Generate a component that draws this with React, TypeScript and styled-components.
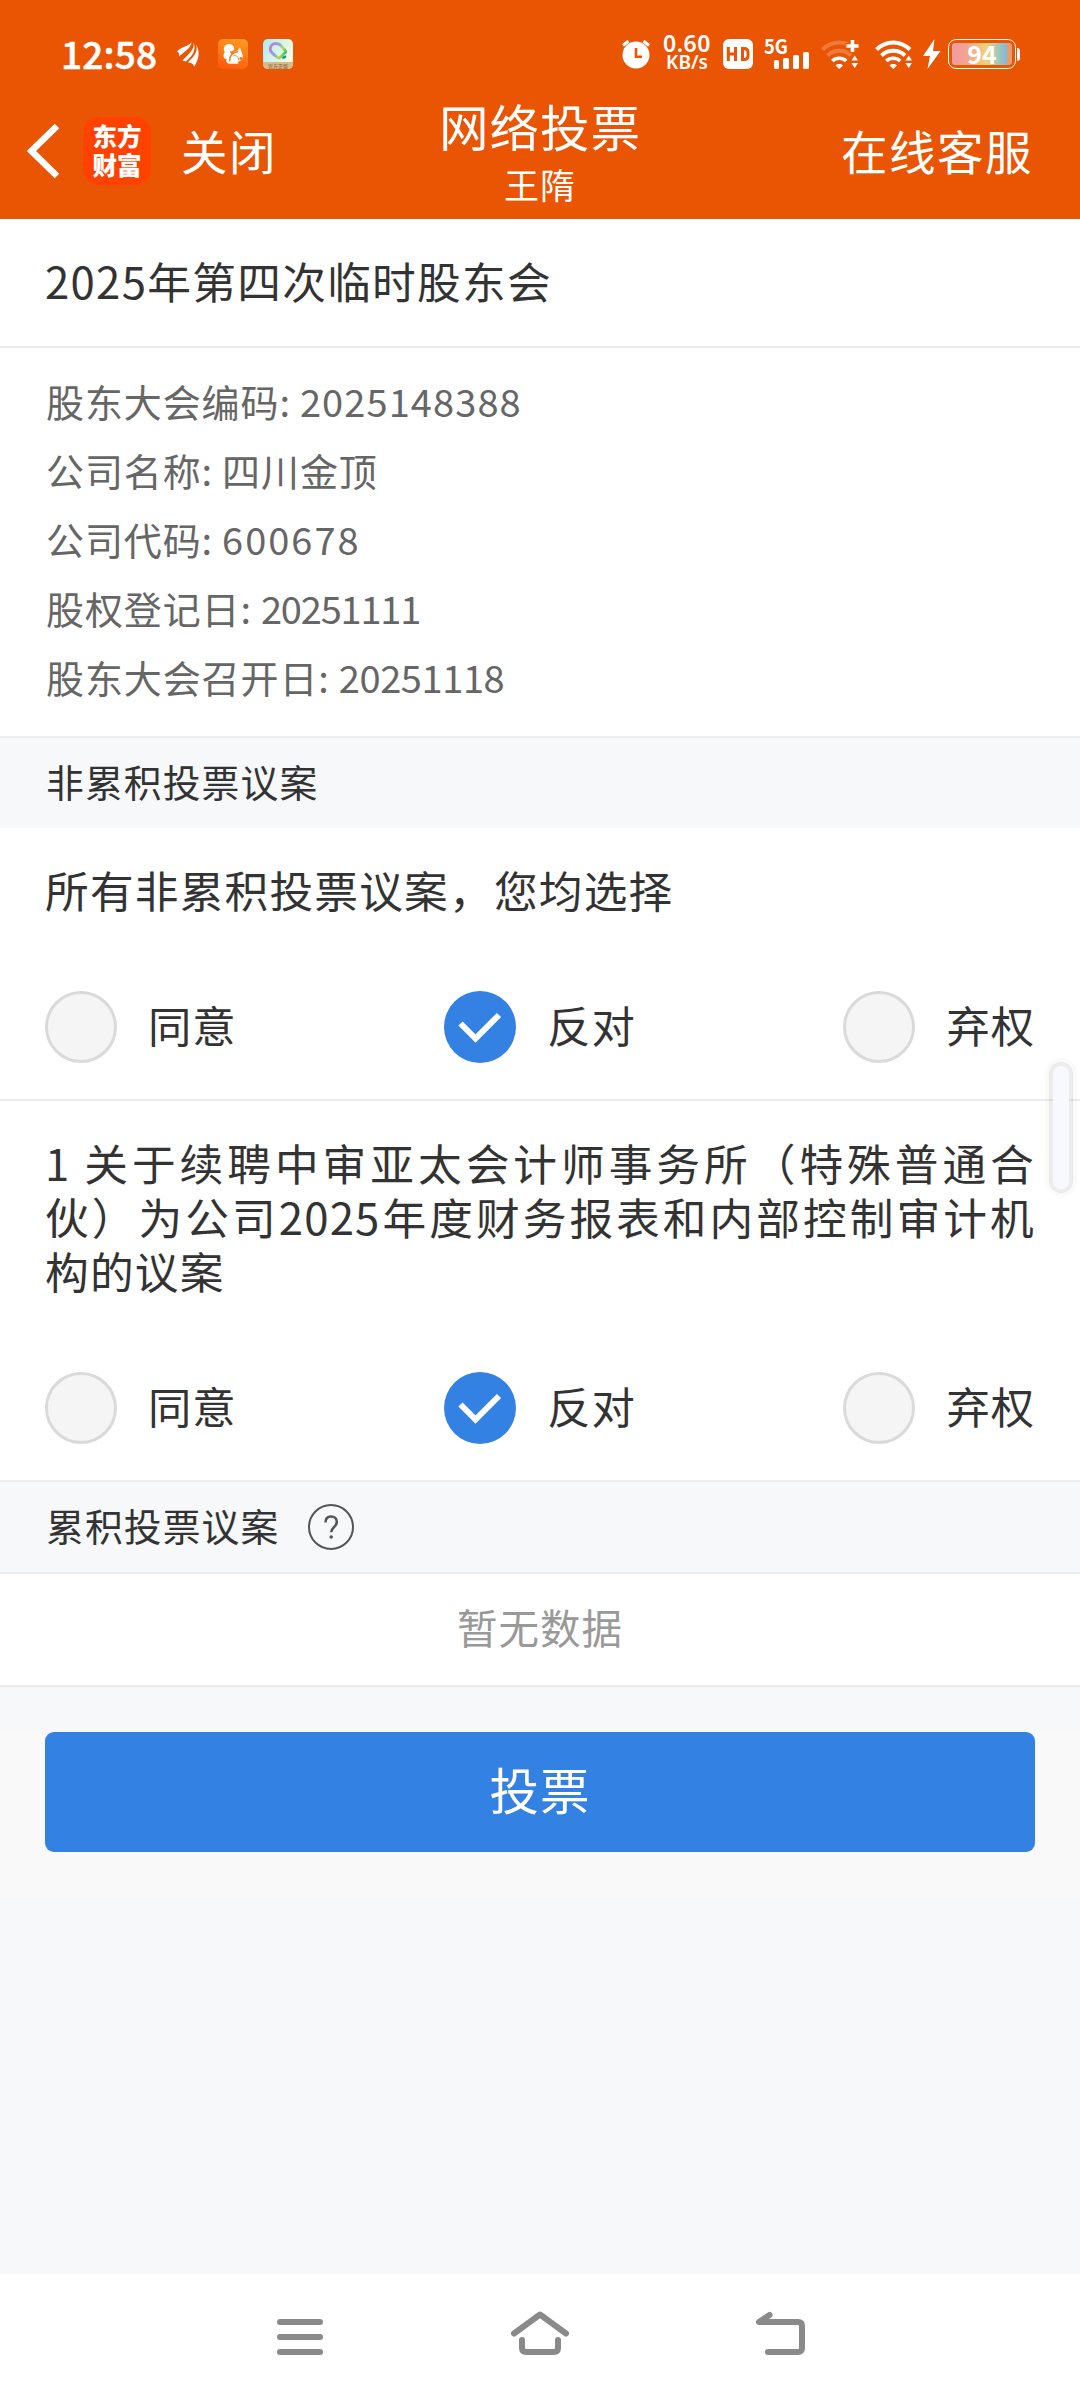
import React, { useState } from "react";
import styled, { createGlobalStyle } from "styled-components";

const Global = createGlobalStyle`
  * { box-sizing: border-box; }
  body { margin: 0; background: #f7f8fa; }
  button { font: inherit; border: 0; padding: 0; background: none; color: inherit; cursor: pointer; }
`;

const Page = styled.div`
  position: relative;
  width: 1080px;
  height: 2400px;
  display: flex;
  flex-direction: column;
  overflow: hidden;
  background: #f7f8fa;
  color: #333;
  font-family: "Noto Sans CJK SC", "Noto Sans", sans-serif;
`;

const Header = styled.header`
  height: 219px;
  background: #ea5504;
  color: #fff;
  flex: none;
`;

const StatusBar = styled.div`
  height: 96px;
  padding: 12px 60px 0 61px;
  display: flex;
  align-items: center;
`;
const Clock = styled.div`
  width: 116px;
  padding-bottom: 3px;
  font-size: 37px;
  line-height: 40px;
  font-weight: 500;
  letter-spacing: 0.2px;
  -webkit-text-stroke: 0.5px #fff;
`;
const StatusIcon = styled.svg<{ $gap?: number }>`
  display: block;
  flex: none;
  overflow: visible;
  margin-left: ${(p) => p.$gap ?? 0}px;
`;
const StatusRight = styled.div`
  margin-left: auto;
  display: flex;
  align-items: center;
`;
const Speed = styled.div`
  width: 52px;
  margin-left: 9px;
  padding-bottom: 3px;
  text-align: center;
  font-family: "Noto Sans", sans-serif;
  font-weight: 600;
  font-size: 23px;
  line-height: 19px;
  letter-spacing: 0.6px;
`;
const SpeedUnit = styled.div`
  font-size: 19px;
  line-height: 19px;
  letter-spacing: 0;
`;
const Battery = styled.div`
  margin-left: 7px;
  width: 68px;
  height: 30px;
  padding: 3px;
  border: 1.5px solid #fff;
  border-radius: 8px;
  display: flex;
`;
const BatteryFill = styled.div`
  width: 100%;
  border-radius: 3px;
  background: linear-gradient(90deg, #f29aa0 0%, #f0a690 25%, #efd27c 58%, #a9c9b4 75%, #7fbbe0 91%, #eb9a70 92%);
  font-size: 25px;
  font-weight: 700;
  line-height: 21px;
  text-align: center;
`;
const BatteryTip = styled.div`
  width: 3px;
  height: 13px;
  margin-left: 1px;
  background: #fff;
  border-radius: 0 3px 3px 0;
`;

const NavBar = styled.div`
  height: 123px;
  display: grid;
  grid-template-columns: 1fr auto 1fr;
  align-items: start;
`;
const NavLeft = styled.div`
  display: flex;
  align-items: center;
  padding: 21px 0 0 27px;
`;
const AppLogo = styled.div`
  width: 68px;
  height: 68px;
  margin-left: 23px;
  border-radius: 15px;
  background: #ff4200;
  display: flex;
  flex-direction: column;
  align-items: center;
  justify-content: center;
  padding-bottom: 3px;
  font-size: 24.5px;
  line-height: 29px;
  font-weight: 900;
`;
const NavLink = styled.button<{ $left?: number }>`
  margin-left: ${(p) => p.$left ?? 0}px;
  padding-bottom: 2px;
  font-size: 46.5px;
  line-height: 58px;
  letter-spacing: 1.5px;
`;
const NavTitle = styled.div`
  margin-top: -3px;
  text-align: center;
  font-size: 49.5px;
  line-height: 66px;
  letter-spacing: 1px;
`;
const NavSub = styled.div`
  font-size: 35px;
  line-height: 50px;
`;
const NavRight = styled.div`
  display: flex;
  justify-content: flex-end;
  padding: 25px 47px 0 0;
`;

const Title = styled.h1`
  margin: 0;
  flex: none;
  height: 129px;
  padding: 29px 45px 0;
  background: #fff;
  border-bottom: 2px solid #ececee;
  font-size: 43.7px;
  letter-spacing: 1.3px;
  line-height: 64px;
  font-weight: 400;
`;
const Info = styled.section`
  flex: none;
  height: 388px;
  padding: 18px 46px 0;
  background: #fff;
  color: #666;
  font-size: 38px;
  letter-spacing: 0.9px;
  line-height: 69px;
`;
const InfoRow = styled.div`
  display: flex;
  gap: 9px;
`;
const InfoValue = styled.span<{ $spacing?: number }>`
  letter-spacing: ${(p) => p.$spacing ?? 0.9}px;
`;

const SectionBar = styled.div<{ $line?: boolean }>`
  flex: none;
  height: ${(p) => (p.$line ? 94 : 92)}px;
  padding: 0 45px;
  display: flex;
  align-items: center;
  gap: 29px;
  background: #f7f8fa;
  border-top: 2px solid #ecedef;
  border-bottom: ${(p) => (p.$line ? "2px solid #ecedef" : "0")};
`;
const SectionName = styled.span`
  padding: 0 0 5px 1px;
  font-size: 37.8px;
  letter-spacing: 1.1px;
  line-height: 54px;
`;
const Proposal = styled.section<{ $height: number; $line?: boolean }>`
  flex: none;
  height: ${(p) => p.$height}px;
  padding: 34px 45px 36px;
  display: flex;
  flex-direction: column;
  justify-content: space-between;
  background: #fff;
  border-bottom: ${(p) => (p.$line ? "2px solid #ececee" : "0")};
`;
const ProposalText = styled.p`
  margin: 0;
  font-size: 43.7px;
  letter-spacing: 1.2px;
  line-height: 54px;
  text-align: justify;
`;
const Options = styled.div`
  display: flex;
  justify-content: space-between;
`;
const Option = styled.button`
  display: flex;
  align-items: center;
  gap: 31px;
`;
const OptionLabel = styled.span`
  padding-bottom: 5px;
  font-size: 43.3px;
  letter-spacing: 1px;
  line-height: 67px;
`;
const Radio = styled.span<{ $on: boolean }>`
  width: 72px;
  height: 72px;
  border-radius: 50%;
  display: flex;
  align-items: center;
  justify-content: center;
  background: ${(p) => (p.$on ? "#3381e3" : "#f5f5f5")};
  border: ${(p) => (p.$on ? "0" : "3px solid #dadada")};
`;
const Help = styled.span`
  width: 46px;
  height: 46px;
  border: 2.5px solid #555;
  border-radius: 50%;
  display: flex;
  align-items: center;
  justify-content: center;
`;
const Empty = styled.div`
  flex: none;
  height: 113px;
  background: #fff;
  border-bottom: 2px solid #ececee;
  color: #999;
  font-size: 40.5px;
  letter-spacing: 1px;
  line-height: 106px;
  text-align: center;
`;
const SubmitArea = styled.div`
  flex: none;
  height: 166px;
  margin-top: 45px;
  padding: 0 45px;
  background: #f9f9f9;
`;
const Submit = styled.button`
  display: block;
  width: 100%;
  height: 120px;
  padding-bottom: 7px;
  border-radius: 9px;
  background: #3381e3;
  color: #fff;
  font-size: 49.5px;
  letter-spacing: 1px;
  line-height: 113px;
`;
const SystemNav = styled.nav`
  flex: none;
  height: 126px;
  margin-top: auto;
  padding: 0 180px 45px;
  display: grid;
  grid-template-columns: repeat(3, 1fr);
  align-items: end;
  justify-items: center;
  background: #fff;

  svg { display: block; }
`;
const EdgeHandle = styled.div`
  position: absolute;
  right: 7px;
  top: 1062px;
  width: 24px;
  height: 131px;
  border: 4px solid rgba(0, 0, 0, 0.07);
  border-radius: 12px;
  background: #f8f9fe;
  background-clip: padding-box;
  box-shadow: 0 0 1px 4px rgba(0, 0, 0, 0.02);
`;

const CHOICES = ["同意", "反对", "弃权"];

function Vote() {
  const [value, setValue] = useState("反对");
  return (
    <Options>
      {CHOICES.map((c) => (
        <Option key={c} onClick={() => setValue(c)}>
          <Radio $on={c === value}>
            {c === value && (
              <svg width="72" height="72" viewBox="0 0 72 72" fill="none" stroke="#fff" strokeWidth="6">
                <path d="M16.5 32.5 31.5 47.5 55 24" />
              </svg>
            )}
          </Radio>
          <OptionLabel>{c}</OptionLabel>
        </Option>
      ))}
    </Options>
  );
}

function Wifi({ weak }: { weak?: boolean }) {
  return (
    <StatusIcon $gap={weak ? 12 : 16} width="38" height="30" viewBox="0 0 38 30" fill="none" stroke="#fff" strokeWidth="4">
      <g opacity={weak ? 0.22 : 1}>
        <path d="M1.5 10.5C11 1 25.5 1 35 10.5" />
        <path d="M6.500 16.500c6.500-6.300 17-6.300 23.500 0" />
      </g>
      <path d="M11.300 22c3.900-3.700 10-3.700 13.900 0" strokeWidth="3.600" />
      <path d="m14.500 26.500c2.200-1.900 5.300-1.900 7.500 0L18.300 30Z" fill="#fff" stroke="none" />
      <path d="m33.700 16.500 3.300 5h-6.600zM33.700 29l3.300-5h-6.600z" fill="#fff" stroke="#ea5504" strokeWidth="1" paintOrder="stroke" />
      {weak && (
        <g>
          <path d="M31.500 0v14M24.500 7h14" stroke="#ea5504" strokeWidth="6" />
          <path d="M31.500 1v12M25.500 7h12" strokeWidth="3.600" />
        </g>
      )}
    </StatusIcon>
  );
}

const INFO: { label: string; value: string; spacing?: number }[] = [
  { label: "股东大会编码:", value: "2025148388", spacing: 1.1 },
  { label: "公司名称:", value: "四川金顶" },
  { label: "公司代码:", value: "600678", spacing: 2 },
  { label: "股权登记日:", value: "20251111", spacing: -1.2 },
  { label: "股东大会召开日:", value: "20251118", spacing: -0.4 },
];

export default function App() {
  return (
    <Page>
      <Global />
      <Header>
        <StatusBar>
          <Clock>12:58</Clock>
          <StatusIcon width="22" height="25" viewBox="0 0 22 25" fill="#fff">
            <path d="M0 9.500C5 4 10 5 14.500.5 13.500 6 8.500 9 2 14.500 2.500 12 2 10.500 0 9.500Z" />
            <path d="M16.300 0C18.500 6.500 12 12 5.500 18.500l3.300 1C15 14.500 20 8 16.300 0Z" />
            <path d="M19.300 2.500c4 8 2.500 14.500-2 22-1-2.500-3-4-6.500-4.300C17 15 21 10 19.300 2.500Z" />
          </StatusIcon>
          <StatusIcon $gap={19} width="30" height="30" viewBox="0 0 30 30">
            <defs>
              <linearGradient id="squirrelBg" x1="0.700" y1="0" x2="0.400" y2="1">
                <stop offset="0" stopColor="#ff9a20" />
                <stop offset="1" stopColor="#ff5a0c" />
              </linearGradient>
            </defs>
            <rect width="30" height="30" rx="5" fill="url(#squirrelBg)" />
            <path d="M10.500 5C6.500 5.500 4.500 9.500 6.800 13.300 4.500 15.500 5 19.500 8.500 20.300c-.8 2.700.5 4.200 3 4.500H20c.8-.7.300-1.700-.8-2 3-.3 5.600-2.300 5.700-5.300 0-1.700-.9-2.500-1.200-4L22 8.500l-2.600 3.300c-2.200 0-4 1.300-5.200 3.400-1.500-.5-2.300-1.700-2-3.200 2 .6 3.800-.2 4-2C16.500 7 14 5 10.500 5Z" fill="#fff" />
            <path d="M11.800 22.500c-.8-5 2.500-9.500 8.500-9.800" fill="none" stroke="#ff7a16" strokeWidth="1.400" />
            <path d="M15.500 16.800c3-.8 5.300 1.300 5 4.500" fill="none" stroke="#ff7a16" strokeWidth="1" />
            <circle cx="22.800" cy="19.500" r="1.400" fill="#ff6a10" />
          </StatusIcon>
          <StatusIcon $gap={15} width="30" height="30" viewBox="0 0 30 30">
            <defs>
              <linearGradient id="badgeBg" x1="0" x2="1" y2="0.600">
                <stop offset="0" stopColor="#aeeaf4" />
                <stop offset="1" stopColor="#fbfbe0" />
              </linearGradient>
              <linearGradient id="badgeLine" x1="0" x2="1" y1="0.300" y2="0.700">
                <stop offset="0" stopColor="#c87bd0" />
                <stop offset="0.400" stopColor="#80a8e8" />
                <stop offset="0.700" stopColor="#c3dd3c" />
                <stop offset="1" stopColor="#2fb68a" />
              </linearGradient>
              <clipPath id="badgeClip">
                <rect width="30" height="30" rx="5" />
              </clipPath>
            </defs>
            <g clipPath="url(#badgeClip)">
              <rect width="30" height="30" fill="url(#badgeBg)" />
              <path d="M7.500 11.500C6.500 7.500 9 4.500 12.500 4.500c2.500 0 4 .2 5.500 2.200l4.300 5c.8 1.300.2 2-1 2.600L17 18.300c-1.200.9-2 .7-3-.3C11 15.700 8.300 14 7.500 11.500Z" fill="none" stroke="url(#badgeLine)" strokeWidth="2.800" strokeLinejoin="round" />
              <path d="M19 19.500c0-2 2-3.300 4.300-3 .3 2.300-1 4-4.300 3Z" fill="#159a84" />
              <rect y="23" width="30" height="7" fill="#d8b988" />
              <text x="15" y="28.500" fontSize="5" textAnchor="middle" fill="#7d6038">官方正版</text>
            </g>
          </StatusIcon>

          <StatusRight>
            <StatusIcon width="31" height="30" viewBox="0 0 31 30">
              <circle cx="15" cy="16" r="13.500" fill="#fff" />
              <path d="M2 6.500 7.500 2M28 6.500 22.500 2" stroke="#fff" strokeWidth="3" />
              <path d="M15 9v8.700h6" fill="none" stroke="#ea5504" strokeWidth="2.600" />
            </StatusIcon>
            <Speed>
              0.60
              <SpeedUnit>KB/s</SpeedUnit>
            </Speed>
            <StatusIcon $gap={10} width="30" height="30" viewBox="0 0 30 30">
              <rect width="30" height="30" rx="6" fill="#fff" />
              <path d="M5.300 8v14M12.500 8v14M5.300 15h7.200M19.500 9.500v11h1.500q4 0 4-4v-3q0-4-4-4z" fill="none" stroke="#ea5504" strokeWidth="3" />
            </StatusIcon>
            <StatusIcon $gap={11} width="45" height="30" viewBox="0 0 45 30" fill="#fff">
              <text x="0" y="15" fontSize="20" fontWeight="700" textLength="24" lengthAdjust="spacingAndGlyphs">5G</text>
              <rect x="10" y="21" width="5" height="9" rx="1.500" />
              <rect x="19" y="19" width="6" height="11" rx="1.500" />
              <rect x="29" y="16" width="6" height="14" rx="1.500" />
              <rect x="39" y="13" width="6" height="17" rx="1.500" />
            </StatusIcon>
            <Wifi weak />
            <Wifi />
            <StatusIcon $gap={10} width="18" height="30" viewBox="0 0 18 30" fill="#fff">
              <path d="M11.500 0 0 17h7L4.500 30 17.500 12H10Z" />
            </StatusIcon>
            <Battery>
              <BatteryFill>94</BatteryFill>
            </Battery>
            <BatteryTip />
          </StatusRight>
        </StatusBar>
        <NavBar>
          <NavLeft>
            <svg width="33" height="56" viewBox="0 0 33 56" fill="none" stroke="#fff" strokeWidth="6.500">
              <path d="M30 3 4.500 28 30 53" />
            </svg>
            <AppLogo>
              <span>东方</span>
              <span>财富</span>
            </AppLogo>
            <NavLink $left={30}>关闭</NavLink>
          </NavLeft>
          <NavTitle>
            网络投票
            <NavSub>王隋</NavSub>
          </NavTitle>
          <NavRight>
            <NavLink>在线客服</NavLink>
          </NavRight>
        </NavBar>
      </Header>

      <Title>2025年第四次临时股东会</Title>
      <Info>
        {INFO.map((r) => (
          <InfoRow key={r.label}>
            <span>{r.label}</span>
            <InfoValue $spacing={r.spacing}>{r.value}</InfoValue>
          </InfoRow>
        ))}
      </Info>

      <SectionBar>
        <SectionName>非累积投票议案</SectionName>
      </SectionBar>
      <Proposal $height={273} $line>
        <ProposalText>所有非累积投票议案，您均选择</ProposalText>
        <Vote />
      </Proposal>
      <Proposal $height={379}>
        <ProposalText>1 关于续聘中审亚太会计师事务所（特殊普通合伙）为公司2025年度财务报表和内部控制审计机构的议案</ProposalText>
        <Vote />
      </Proposal>

      <SectionBar $line>
        <SectionName>累积投票议案</SectionName>
        <Help>
          <svg width="20" height="28" viewBox="0 0 20 28" fill="none" stroke="#555" strokeWidth="2.600">
            <path d="M4.500 9.500C4.500 5.500 6.500 3.500 10 3.500s5.800 2.200 5.800 5.500c0 5-5.600 5.300-5.600 10.300" />
            <circle cx="10.200" cy="24" r="1.800" fill="#555" stroke="none" />
          </svg>
        </Help>
      </SectionBar>
      <Empty>暂无数据</Empty>
      <SubmitArea>
        <Submit>投票</Submit>
      </SubmitArea>

      <SystemNav>
        <svg width="46" height="36" viewBox="0 0 46 36" stroke="#8a8a8a" strokeWidth="6" strokeLinecap="round">
          <path d="M3 3h40M3 18h40M3 33h40" />
        </svg>
        <svg width="58" height="44" viewBox="0 0 58 44" fill="none" stroke="#8a8a8a" strokeWidth="6" strokeLinecap="round" strokeLinejoin="round">
          <path d="M3 22.500 29 3.500 55 22.500M11 29V37q0 4 4 4h28q4 0 4-4v-8" />
        </svg>
        <svg width="49" height="44" viewBox="0 0 49 44" fill="none" stroke="#8a8a8a" strokeWidth="6" strokeLinecap="round" strokeLinejoin="round">
          <path d="M13.500 4 3 11h39q4 0 4 4v22q0 4-4 4H12" />
        </svg>
      </SystemNav>
      <EdgeHandle />
    </Page>
  );
}
